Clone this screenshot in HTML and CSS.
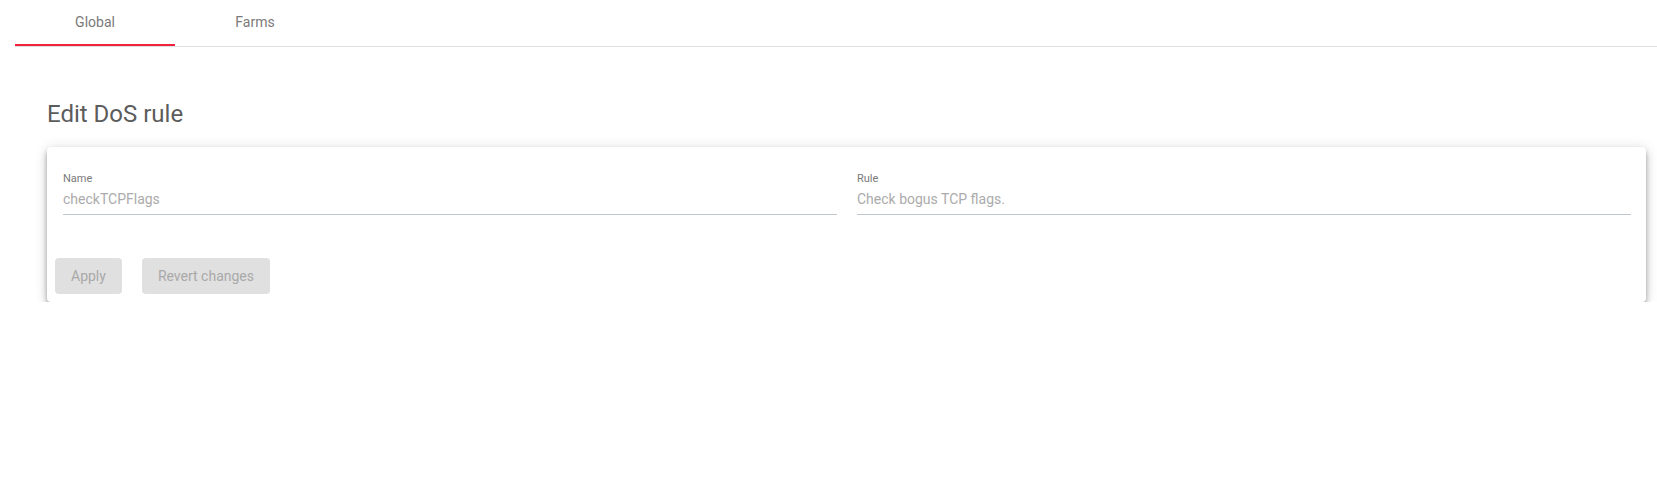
FILE: index.html
```html
<!DOCTYPE html>
<html lang="en">
<head>
<meta charset="utf-8">
<title>Edit DoS rule</title>
<link rel="stylesheet" href="styles.css">
</head>
<body>
<nav class="tabs">
  <div class="tab tab-active">Global</div>
  <div class="tab">Farms</div>
</nav>
<main class="content">
  <h1 class="title">Edit DoS rule</h1>
  <section class="card">
    <div class="fields">
      <div class="field">
        <div class="field-label">Name</div>
        <div class="field-value">checkTCPFlags</div>
      </div>
      <div class="field">
        <div class="field-label">Rule</div>
        <div class="field-value">Check bogus TCP flags.</div>
      </div>
    </div>
    <div class="actions">
      <button class="btn" disabled>Apply</button>
      <button class="btn" disabled>Revert changes</button>
    </div>
  </section>
</main>
</body>
</html>
```

FILE: styles.css
```css
html, body {
  margin: 0;
  padding: 0;
  background: #fff;
  font-family: Roboto, "Liberation Sans", sans-serif;
}

.tabs {
  display: flex;
  margin-left: 15px;
  height: 46px;
  border-bottom: 1px solid #e0e0e0;
}

.tab {
  width: 160px;
  height: 46px;
  box-sizing: border-box;
  padding-bottom: 2px;
  display: flex;
  align-items: center;
  justify-content: center;
  font-size: 14px;
  line-height: 16px;
  color: #7a7a7a;
}

.tab-active {
  border-bottom: 2px solid #f0233d;
  padding-bottom: 0;
}

.content {
  margin: 0 11px 0 47px;
  padding-top: 51px;
}

.title {
  margin: 0 0 17px 0;
  font-size: 24px;
  line-height: 32px;
  font-weight: 400;
  color: #5c5c5c;
}

.card {
  background: #fff;
  border-radius: 4px;
  box-shadow: 0 3px 5px -1px rgba(0,0,0,.3), 0 5px 8px 0 rgba(0,0,0,.18), 0 1px 14px 0 rgba(0,0,0,.12);
  padding: 25px 15px 8px 16px;
}

.fields {
  display: flex;
  gap: 20px;
}

.field {
  flex: 1;
  min-width: 0;
}

.field-label {
  font-size: 11px;
  line-height: 13px;
  color: #7a7a7a;
}

.field-value {
  margin-top: 6px;
  padding-bottom: 6px;
  font-size: 14px;
  line-height: 17px;
  color: #ababab;
  border-bottom: 1px solid #c2c7cc;
}

.actions {
  display: flex;
  gap: 20px;
  margin: 43px 0 0 -8px;
}

.btn {
  height: 36px;
  padding: 0 16px;
  border: none;
  border-radius: 4px;
  background: #e0e0e0;
  color: #a9a9a9;
  font-family: Roboto, "Liberation Sans", sans-serif;
  font-size: 14px;
  font-weight: 400;
  line-height: 36px;
}
```
